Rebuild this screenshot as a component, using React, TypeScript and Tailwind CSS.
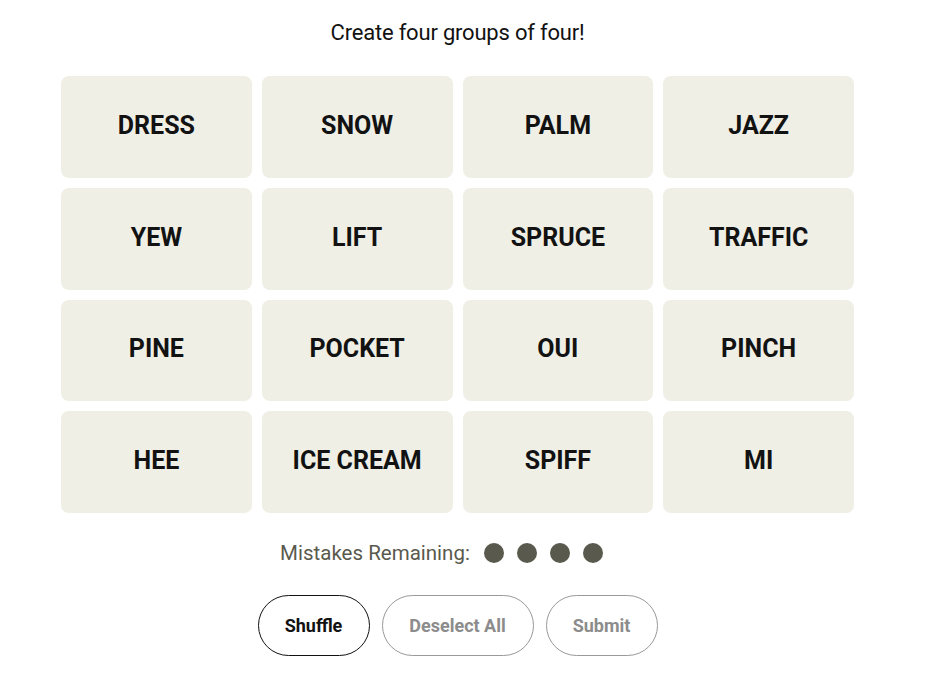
import React, { useState } from 'react';

const words = [
  'DRESS', 'SNOW', 'PALM', 'JAZZ',
  'YEW', 'LIFT', 'SPRUCE', 'TRAFFIC',
  'PINE', 'POCKET', 'OUI', 'PINCH',
  'HEE', 'ICE CREAM', 'SPIFF', 'MI',
];

const App: React.FC = () => {
  const [selected, setSelected] = useState<string[]>([]);

  const toggle = (w: string) => {
    if (selected.includes(w)) {
      setSelected(selected.filter((s) => s !== w));
    } else if (selected.length < 4) {
      setSelected([...selected, w]);
    }
  };

  return (
    <div className="min-h-screen bg-white font-['Roboto',sans-serif]">
      <div className="w-[915px] flex flex-col items-center pt-[20px]">
        <p className="text-[22px] leading-[26px] text-[#121212] tracking-[-0.2px]">
          Create four groups of four!
        </p>

        <div className="mt-[30px] w-[793px] grid grid-cols-4 gap-[10px]">
          {words.map((w) => {
            const on = selected.includes(w);
            return (
              <button
                key={w}
                onClick={() => toggle(w)}
                className={
                  'h-[101.75px] pb-[2px] rounded-[8px] flex items-center justify-center text-[25px] leading-[30px] font-bold uppercase ' +
                  (on ? 'bg-[#5a594e] text-white' : 'bg-[#efefe6] text-[#121212]')
                }
              >
                {w}
              </button>
            );
          })}
        </div>

        <div className="mt-[28px] h-[24px] flex items-center pr-[32px] text-[#5a594e]">
          <span className="text-[20.5px]">Mistakes Remaining:</span>
          <div className="ml-[14px] flex gap-[13px]">
            {[0, 1, 2, 3].map((i) => (
              <span key={i} className="w-[20px] h-[20px] rounded-full bg-[#5a594e]" />
            ))}
          </div>
        </div>

        <div className="mt-[30px] flex gap-[12px]">
          <button className="w-[112px] h-[61px] rounded-full border border-[#121212] text-[18px] font-bold text-[#121212]">
            Shuffle
          </button>
          <button
            onClick={() => setSelected([])}
            className="w-[152px] h-[61px] rounded-full border border-[#999999] text-[18px] font-bold text-[#8c8c8c]"
          >
            Deselect All
          </button>
          <button className="w-[112px] h-[61px] rounded-full border border-[#999999] text-[18px] font-bold text-[#8c8c8c]">
            Submit
          </button>
        </div>
      </div>
    </div>
  );
};

export default App;
